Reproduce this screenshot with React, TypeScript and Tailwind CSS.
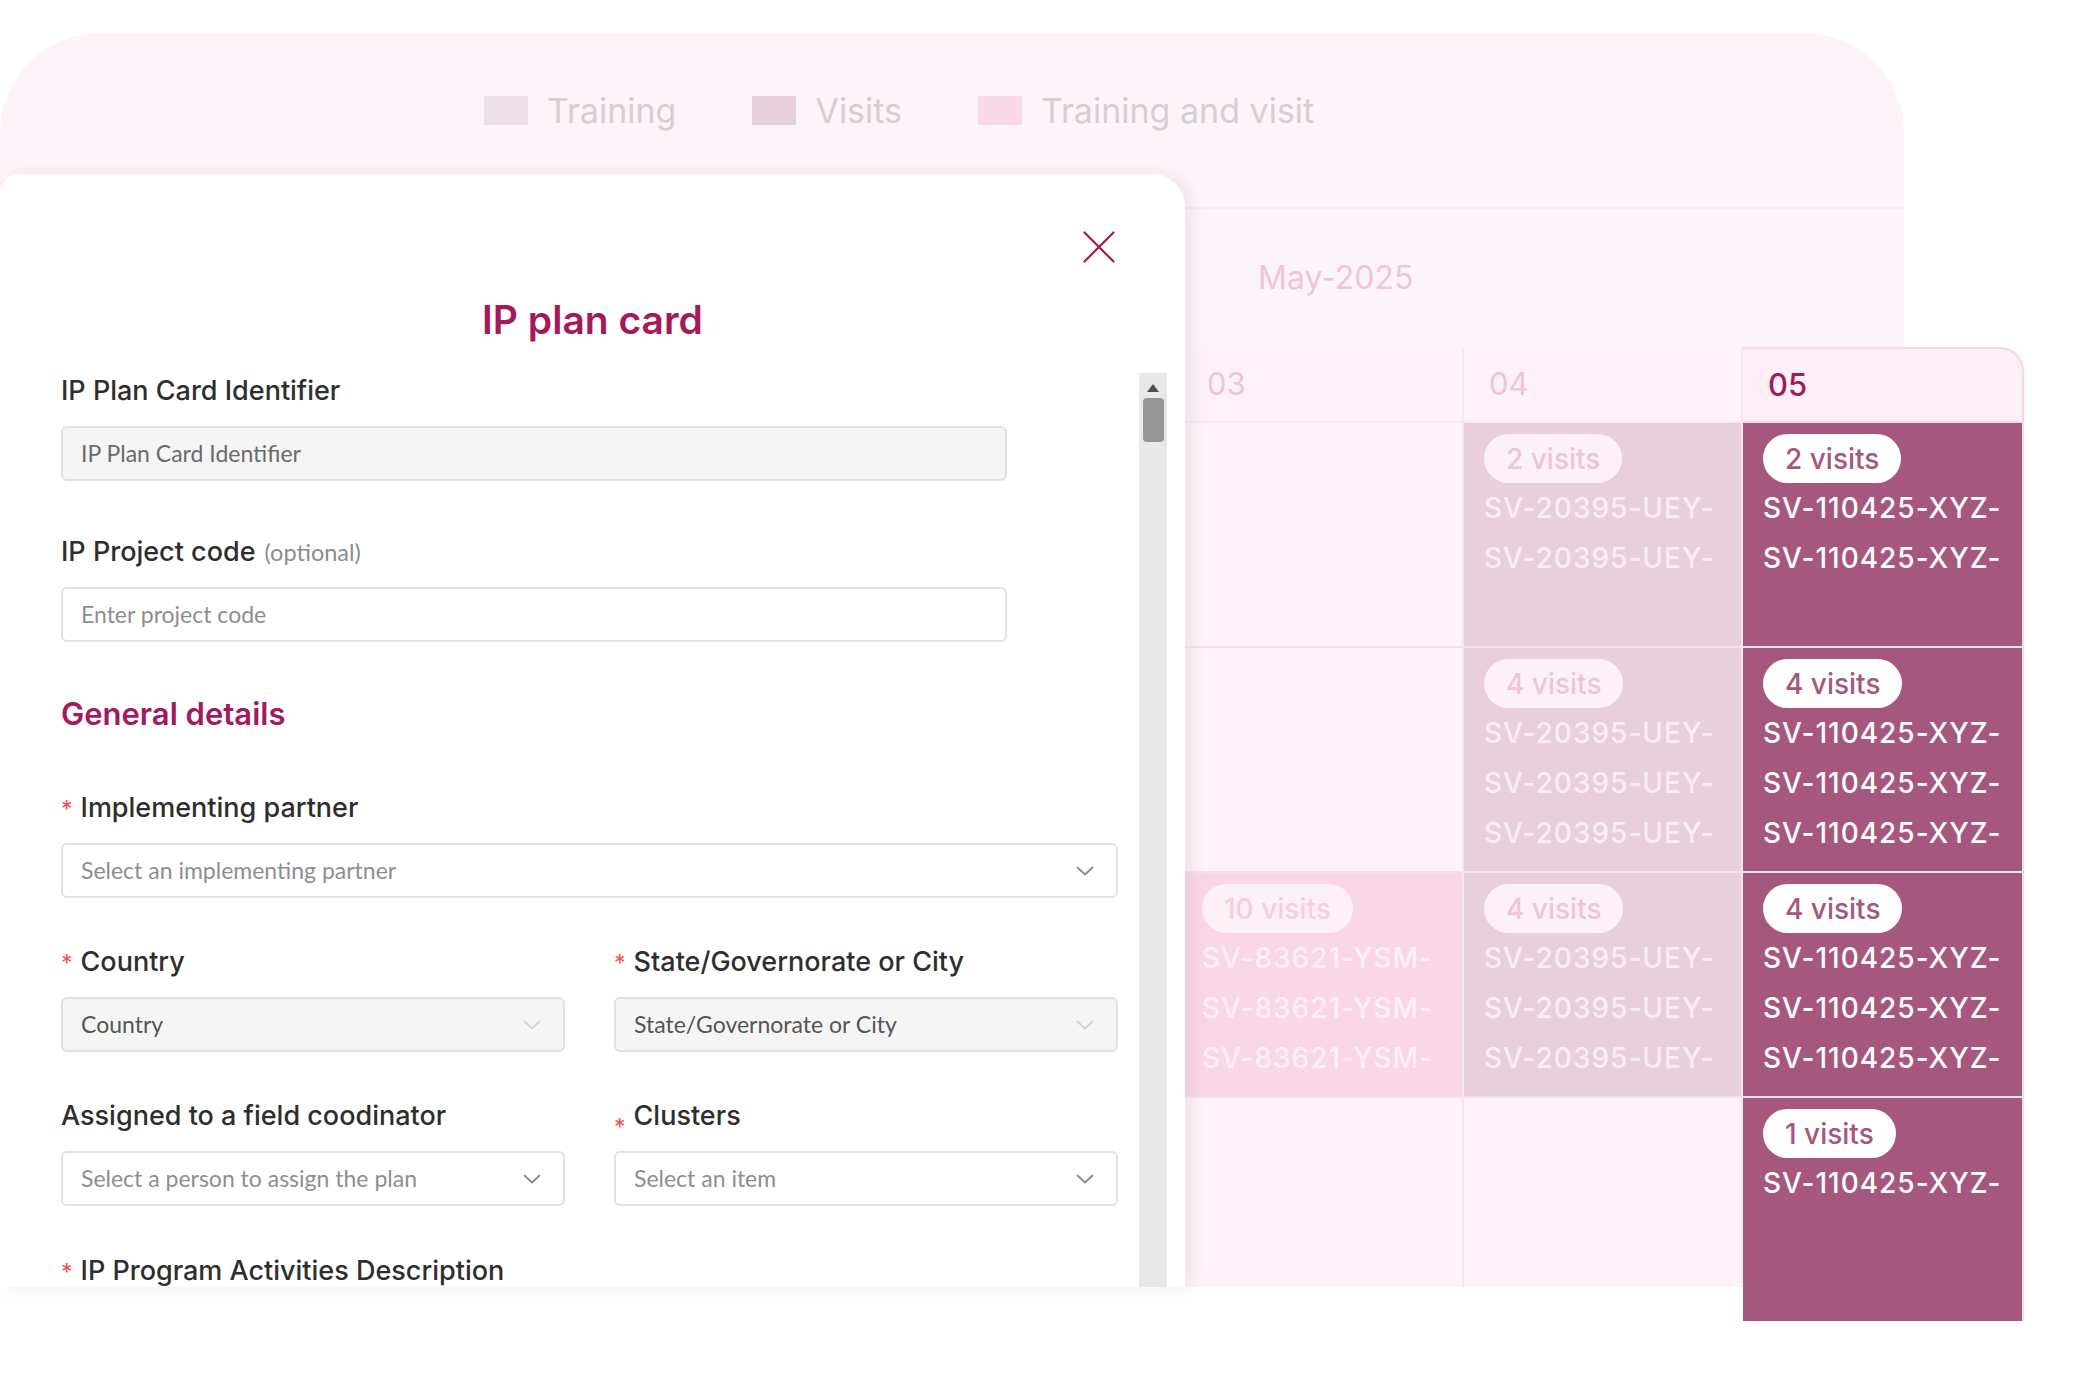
import React from "react";

const SANS = "font-['Inter','Noto_Sans',sans-serif]";
const LATO = "font-['Lato','Noto_Sans',sans-serif]";

type Tone = "empty" | "visit" | "both" | "active";

interface Cell {
  tone: Tone;
  count?: number;
  code?: string;
  lines?: number;
}

const toneStyles: Record<Tone, { cell: string; badge: string; text: string }> = {
  empty: { cell: "bg-[#fdf3f8]", badge: "", text: "" },
  visit: {
    cell: "bg-[#e9cfdc]",
    badge: "bg-[#fcf1f6] text-[#ecc6d8]",
    text: "text-[#f9edf3]",
  },
  both: {
    cell: "bg-[#f9d7e7]",
    badge: "bg-[#fdf1f7] text-[#f5cfe0]",
    text: "text-[#fdf0f6]",
  },
  active: {
    cell: "bg-[#a6577d]",
    badge: "bg-white text-[#a6577d]",
    text: "text-white",
  },
};

const columns: { day: string; active?: boolean; cells: Cell[] }[] = [
  {
    day: "03",
    cells: [
      { tone: "empty" },
      { tone: "empty" },
      { tone: "both", count: 10, code: "SV-83621-YSM-", lines: 3 },
      { tone: "empty" },
    ],
  },
  {
    day: "04",
    cells: [
      { tone: "visit", count: 2, code: "SV-20395-UEY-", lines: 2 },
      { tone: "visit", count: 4, code: "SV-20395-UEY-", lines: 3 },
      { tone: "visit", count: 4, code: "SV-20395-UEY-", lines: 3 },
      { tone: "empty" },
    ],
  },
  {
    day: "05",
    active: true,
    cells: [
      { tone: "active", count: 2, code: "SV-110425-XYZ-", lines: 2 },
      { tone: "active", count: 4, code: "SV-110425-XYZ-", lines: 3 },
      { tone: "active", count: 4, code: "SV-110425-XYZ-", lines: 3 },
      { tone: "active", count: 1, code: "SV-110425-XYZ-", lines: 1 },
    ],
  },
];

function Chevron({ muted }: { muted?: boolean }) {
  return (
    <svg width="18" height="10" viewBox="0 0 18 10" fill="none" className="shrink-0">
      <path
        d="M1.5 1.5 9 8.5l7.5-7"
        stroke={muted ? "#d3d3d3" : "#8a8a8a"}
        strokeWidth="1.8"
        strokeLinecap="round"
        strokeLinejoin="round"
      />
    </svg>
  );
}

function Label({
  text,
  required,
  low,
  hint,
}: {
  text: string;
  required?: boolean;
  low?: boolean;
  hint?: string;
}) {
  return (
    <div className={`h-[32px] whitespace-nowrap text-[27px] font-medium leading-[32px] text-[#2e2e2e] ${SANS}`}>
      {required && (
        <span
          className={`mr-[8px] inline-block text-[23px] font-normal text-[#ff4d4f] ${low ? "translate-y-[10px]" : ""}`}
        >
          *
        </span>
      )}
      {text}
      {hint && (
        <span className={`ml-[9px] text-[23.5px] font-normal text-[#8c8c8c] ${LATO}`}>({hint})</span>
      )}
    </div>
  );
}

function Box({
  text,
  disabled,
  select,
  value,
  width = "w-full",
}: {
  text: string;
  disabled?: boolean;
  select?: boolean;
  value?: boolean;
  width?: string;
}) {
  return (
    <div
      className={`mt-[19px] flex h-[55px] items-center justify-between rounded-[6px] border-2 border-[#e1e1e1] pl-[18px] pr-[22px] text-[23px] ${LATO} ${width} ${
        disabled ? "bg-[#f5f5f5]" : "bg-white"
      } ${value ? "text-[#555555]" : disabled ? "text-[#6a6a6a]" : "text-[#8e8e8e]"}`}
    >
      <span className="truncate">{text}</span>
      {select && <Chevron muted={disabled} />}
    </div>
  );
}

function CalendarCell({ cell, last, tall }: { cell: Cell; last?: boolean; tall?: boolean }) {
  const t = toneStyles[cell.tone];
  const height = last ? (tall ? "h-[223px]" : "h-[189px]") : "h-[225px] border-b-2 border-[#f1e3ea]";
  return (
    <div className={`${height} ${t.cell} px-[20px] pt-[11px]`}>
      {cell.count !== undefined && (
        <>
          <div
            className={`inline-flex h-[49px] items-center rounded-full px-[22px] text-[28px] font-medium ${t.badge}`}
          >
            {cell.count} visits
          </div>
          {Array.from({ length: cell.lines ?? 0 }).map((_, i) => (
            <div
              key={i}
              className={`whitespace-nowrap text-[28px] font-medium leading-[50px] tracking-[1px] ${t.text}`}
            >
              {cell.code}
            </div>
          ))}
        </>
      )}
    </div>
  );
}

function Calendar() {
  return (
    <div className={`ml-[1182px] flex ${SANS}`}>
      {columns.map((col, ci) => (
        <div
          key={col.day}
          className={`flex flex-col ${ci === 0 ? "w-[282px]" : ci === 1 ? "w-[279px]" : "w-[281px]"}`}
        >
          <div
            className={`flex h-[76px] items-center pl-[25px] text-[31px] ${
              col.active
                ? "rounded-tr-[24px] border-t-2 border-r-2 border-b-2 border-[#f9d4e5] bg-[#fef0f6] font-medium text-[#a3195b]"
                : "border-b-2 border-r-2 border-[#fbe6ef] bg-[#fdf2f8] text-[#efc3d8]"
            }`}
          >
            {col.day}
          </div>
          {col.cells.map((cell, i) => (
            <div key={i} className={ci < 2 ? "border-r-2 border-[#f6e6ee]" : "border-r-2 border-[#ecdfe5]"}>
              <CalendarCell cell={cell} last={i === col.cells.length - 1} tall={col.active} />
            </div>
          ))}
        </div>
      ))}
    </div>
  );
}

function Legend() {
  const items = [
    { label: "Training", color: "bg-[#efe0e7]", gap: "" },
    { label: "Visits", color: "bg-[#e9d0dd]", gap: "ml-[76px]" },
    { label: "Training and visit", color: "bg-[#f9d8e8]", gap: "ml-[76px]" },
  ];
  return (
    <div className="flex h-[176px] items-start border-b-2 border-[#fbe9f2] pl-[484px] pt-[57px]">
      {items.map((it) => (
        <div key={it.label} className={`flex h-[40px] items-center ${it.gap}`}>
          <div className={`h-[29px] w-[44px] ${it.color}`} />
          <span className="ml-[19px] text-[34px] text-[#d4cfd2]">{it.label}</span>
        </div>
      ))}
    </div>
  );
}

function Modal() {
  return (
    <div className="absolute left-0 top-[174px] z-10 flex h-[1113px] w-[1185px] flex-col overflow-hidden rounded-tl-[20px] rounded-tr-[32px] bg-white shadow-[6px_0_18px_rgba(170,100,140,0.13)]">
      <button type="button" aria-label="Close" className="absolute right-[70px] top-[57px] h-[32px] w-[32px]">
        <svg width="32" height="32" viewBox="0 0 32 32" fill="none">
          <path d="M1.5 1.5 30.5 30.5M30.5 1.5 1.5 30.5" stroke="#a3195b" strokeWidth="2.2" strokeLinecap="round" />
        </svg>
      </button>

      <h2 className={`pt-[123px] text-center text-[39px] font-semibold leading-[46px] text-[#a3195b] ${SANS}`}>
        IP plan card
      </h2>

      <div className="mt-[30px] flex min-h-0 flex-1">
        <div className="w-[1118px] shrink-0 overflow-hidden pl-[61px] pt-[2px]">
          <Label text="IP Plan Card Identifier" />
          <Box text="IP Plan Card Identifier" disabled width="w-[946px]" />

          <div className="mt-[55px]">
            <Label text="IP Project code" hint="optional" />
          </div>
          <Box text="Enter project code" width="w-[946px]" />

          <div className={`mt-[54px] text-[31px] font-semibold leading-[36px] text-[#a3195b] ${SANS}`}>
            General details
          </div>

          <div className="mt-[60px]">
            <Label text="Implementing partner" required />
          </div>
          <Box text="Select an implementing partner" select />

          <div className="mt-[48px] grid grid-cols-2 gap-x-[49px]">
            <div>
              <Label text="Country" required />
              <Box text="Country" disabled select value />
            </div>
            <div>
              <Label text="State/Governorate or City" required />
              <Box text="State/Governorate or City" disabled select value />
            </div>
          </div>

          <div className="mt-[48px] grid grid-cols-2 gap-x-[49px]">
            <div>
              <Label text="Assigned to a field coodinator" />
              <Box text="Select a person to assign the plan" select />
            </div>
            <div>
              <Label text="Clusters" required low />
              <Box text="Select an item" select />
            </div>
          </div>

          <div className="mt-[49px]">
            <Label text="IP Program Activities Description" required />
          </div>
        </div>

        <div className="ml-[21px] flex w-[28px] shrink-0 flex-col items-center bg-[#e8e8e8] pt-[11px]">
          <svg width="12" height="8" viewBox="0 0 12 8">
            <path d="M6 0 12 8H0z" fill="#505050" />
          </svg>
          <div className="mt-[6px] h-[44px] w-[21px] rounded-[4px] bg-[#969696]" />
        </div>
      </div>
    </div>
  );
}

export default function App() {
  return (
    <div className={`relative h-[1380px] w-[2100px] overflow-hidden bg-white ${SANS}`}>
      <div className="pt-[33px]">
        <div className="flex h-[314px] w-[1904px] flex-col rounded-t-[100px] bg-[#fdf4f9]">
          <Legend />
          <div className="flex flex-1 items-center pl-[1258px] text-[32px] text-[#f0c5da]">May-2025</div>
        </div>
        <Calendar />
      </div>
      <Modal />
    </div>
  );
}
